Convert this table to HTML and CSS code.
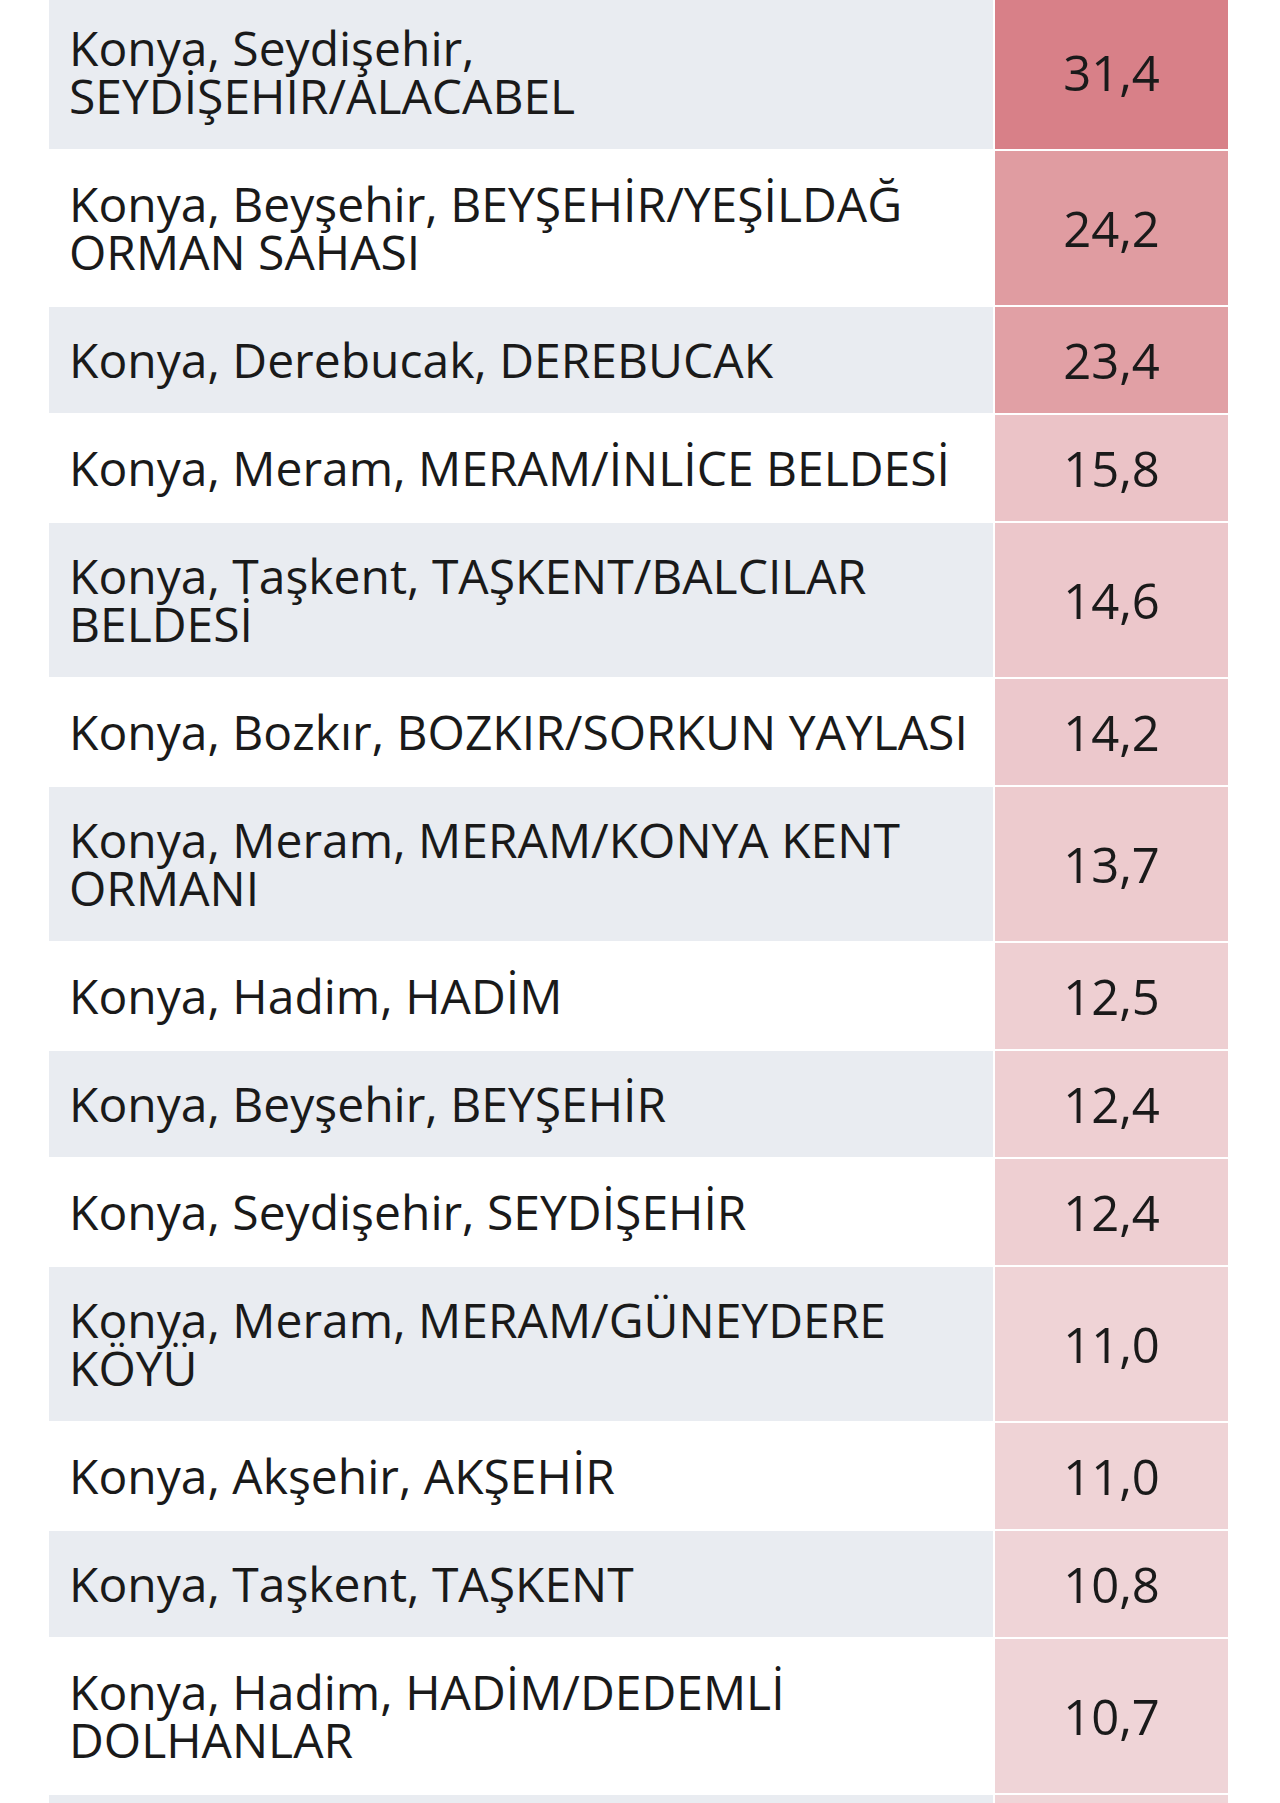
FILE: index.html
```html
<!DOCTYPE html>
<html lang="tr">
<head>
<meta charset="utf-8">
<title>Konya</title>
<link rel="stylesheet" href="styles.css">
</head>
<body>
<table class="heat">
<tbody>
<tr><td class="place">Konya, Seydişehir, SEYDİŞEHİR/ALACABEL</td><td class="val" style="background:#d88088">31,4</td></tr>
<tr><td class="place">Konya, Beyşehir, BEYŞEHİR/YEŞİLDAĞ ORMAN SAHASI</td><td class="val" style="background:#e09ca1">24,2</td></tr>
<tr><td class="place">Konya, Derebucak, DEREBUCAK</td><td class="val" style="background:#e1a0a5">23,4</td></tr>
<tr><td class="place">Konya, Meram, MERAM/İNLİCE BELDESİ</td><td class="val" style="background:#ebc3c7">15,8</td></tr>
<tr><td class="place">Konya, Taşkent, TAŞKENT/BALCILAR BELDESİ</td><td class="val" style="background:#ecc7cb">14,6</td></tr>
<tr><td class="place">Konya, Bozkır, BOZKIR/SORKUN YAYLASI</td><td class="val" style="background:#ecc8cc">14,2</td></tr>
<tr><td class="place">Konya, Meram, MERAM/KONYA KENT ORMANI</td><td class="val" style="background:#edcbce">13,7</td></tr>
<tr><td class="place">Konya, Hadim, HADİM</td><td class="val" style="background:#eecfd2">12,5</td></tr>
<tr><td class="place">Konya, Beyşehir, BEYŞEHİR</td><td class="val" style="background:#eecfd2">12,4</td></tr>
<tr><td class="place">Konya, Seydişehir, SEYDİŞEHİR</td><td class="val" style="background:#eecfd2">12,4</td></tr>
<tr><td class="place">Konya, Meram, MERAM/GÜNEYDERE KÖYÜ</td><td class="val" style="background:#efd3d6">11,0</td></tr>
<tr><td class="place">Konya, Akşehir, AKŞEHİR</td><td class="val" style="background:#efd3d6">11,0</td></tr>
<tr><td class="place">Konya, Taşkent, TAŞKENT</td><td class="val" style="background:#efd4d7">10,8</td></tr>
<tr><td class="place">Konya, Hadim, HADİM/DEDEMLİ DOLHANLAR</td><td class="val" style="background:#efd4d7">10,7</td></tr>
<tr><td class="place">&nbsp;</td><td class="val" style="background:#efd5d8">&nbsp;</td></tr>
</tbody>
</table>
</body>
</html>
```
FILE: styles.css
```css
html, body {
  margin: 0;
  padding: 0;
  background: #ffffff;
}
body {
  font-family: "Open Sans", "Noto Sans", sans-serif;
  color: #1a1a1a;
}
.heat {
  margin: -7px 0 0 47px;
  width: 1183px;
  border-collapse: separate;
  border-spacing: 2px;
  table-layout: fixed;
}
.heat tr:nth-child(odd) .place {
  background: #e9ecf1;
}
.heat tr:nth-child(even) .place {
  background: #ffffff;
}
.place {
  width: 904px;
  padding: 29px 20px 29px 20px;
  font-size: 48px;
  line-height: 48px;
  text-align: left;
  vertical-align: middle;
}
.val {
  padding: 29px 0;
  font-size: 49px;
  line-height: 48px;
  text-align: center;
  vertical-align: middle;
}
```
